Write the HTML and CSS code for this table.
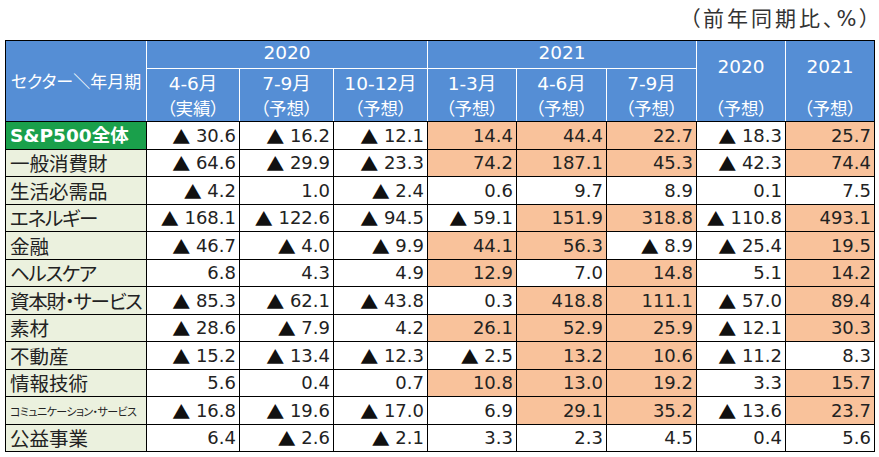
FILE: index.html
```html
<!DOCTYPE html>
<html lang="ja">
<head>
<meta charset="utf-8">
<title>セクター別 前年同期比</title>
<link rel="stylesheet" href="styles.css">
</head>
<body>
<div class="page">
  <div class="unit">（前年同期比、%）</div>
  <div class="table">
    <div class="head">
      <div class="h corner">セクター＼年月期</div>
      <div class="h grp g20">2020</div>
      <div class="h grp g21">2021</div>
      <div class="h ann a20"><span class="yr">2020</span><span class="ln">（予想）</span></div>
      <div class="h ann a21"><span class="yr">2021</span><span class="ln">（予想）</span></div>
      <div class="h sub"><span class="ln">4-6月</span><span class="ln">（実績）</span></div>
      <div class="h sub"><span class="ln">7-9月</span><span class="ln">（予想）</span></div>
      <div class="h sub"><span class="ln">10-12月</span><span class="ln">（予想）</span></div>
      <div class="h sub"><span class="ln">1-3月</span><span class="ln">（予想）</span></div>
      <div class="h sub"><span class="ln">4-6月</span><span class="ln">（予想）</span></div>
      <div class="h sub"><span class="ln">7-9月</span><span class="ln">（予想）</span></div>
    </div>
    <div class="body">
      <div class="c lbl total">S&amp;P500全体</div>
      <div class="c"><span class="tri">▲</span> 30.6</div>
      <div class="c"><span class="tri">▲</span> 16.2</div>
      <div class="c"><span class="tri">▲</span> 12.1</div>
      <div class="c o">14.4</div>
      <div class="c o">44.4</div>
      <div class="c o">22.7</div>
      <div class="c"><span class="tri">▲</span> 18.3</div>
      <div class="c o">25.7</div>

      <div class="c lbl">一般消費財</div>
      <div class="c"><span class="tri">▲</span> 64.6</div>
      <div class="c"><span class="tri">▲</span> 29.9</div>
      <div class="c"><span class="tri">▲</span> 23.3</div>
      <div class="c o">74.2</div>
      <div class="c o">187.1</div>
      <div class="c o">45.3</div>
      <div class="c"><span class="tri">▲</span> 42.3</div>
      <div class="c o">74.4</div>

      <div class="c lbl">生活必需品</div>
      <div class="c"><span class="tri">▲</span> 4.2</div>
      <div class="c">1.0</div>
      <div class="c"><span class="tri">▲</span> 2.4</div>
      <div class="c">0.6</div>
      <div class="c">9.7</div>
      <div class="c">8.9</div>
      <div class="c">0.1</div>
      <div class="c">7.5</div>

      <div class="c lbl kana">エネルギー</div>
      <div class="c"><span class="tri">▲</span> 168.1</div>
      <div class="c"><span class="tri">▲</span> 122.6</div>
      <div class="c"><span class="tri">▲</span> 94.5</div>
      <div class="c"><span class="tri">▲</span> 59.1</div>
      <div class="c o">151.9</div>
      <div class="c o">318.8</div>
      <div class="c"><span class="tri">▲</span> 110.8</div>
      <div class="c o">493.1</div>

      <div class="c lbl">金融</div>
      <div class="c"><span class="tri">▲</span> 46.7</div>
      <div class="c"><span class="tri">▲</span> 4.0</div>
      <div class="c"><span class="tri">▲</span> 9.9</div>
      <div class="c o">44.1</div>
      <div class="c o">56.3</div>
      <div class="c"><span class="tri">▲</span> 8.9</div>
      <div class="c"><span class="tri">▲</span> 25.4</div>
      <div class="c o">19.5</div>

      <div class="c lbl kana">ヘルスケア</div>
      <div class="c">6.8</div>
      <div class="c">4.3</div>
      <div class="c">4.9</div>
      <div class="c o">12.9</div>
      <div class="c">7.0</div>
      <div class="c o">14.8</div>
      <div class="c">5.1</div>
      <div class="c o">14.2</div>

      <div class="c lbl kana">資本財・サービス</div>
      <div class="c"><span class="tri">▲</span> 85.3</div>
      <div class="c"><span class="tri">▲</span> 62.1</div>
      <div class="c"><span class="tri">▲</span> 43.8</div>
      <div class="c">0.3</div>
      <div class="c o">418.8</div>
      <div class="c o">111.1</div>
      <div class="c"><span class="tri">▲</span> 57.0</div>
      <div class="c o">89.4</div>

      <div class="c lbl">素材</div>
      <div class="c"><span class="tri">▲</span> 28.6</div>
      <div class="c"><span class="tri">▲</span> 7.9</div>
      <div class="c">4.2</div>
      <div class="c o">26.1</div>
      <div class="c o">52.9</div>
      <div class="c o">25.9</div>
      <div class="c"><span class="tri">▲</span> 12.1</div>
      <div class="c o">30.3</div>

      <div class="c lbl">不動産</div>
      <div class="c"><span class="tri">▲</span> 15.2</div>
      <div class="c"><span class="tri">▲</span> 13.4</div>
      <div class="c"><span class="tri">▲</span> 12.3</div>
      <div class="c"><span class="tri">▲</span> 2.5</div>
      <div class="c o">13.2</div>
      <div class="c o">10.6</div>
      <div class="c"><span class="tri">▲</span> 11.2</div>
      <div class="c">8.3</div>

      <div class="c lbl">情報技術</div>
      <div class="c">5.6</div>
      <div class="c">0.4</div>
      <div class="c">0.7</div>
      <div class="c o">10.8</div>
      <div class="c o">13.0</div>
      <div class="c o">19.2</div>
      <div class="c">3.3</div>
      <div class="c o">15.7</div>

      <div class="c lbl small">コミュニケーション・サービス</div>
      <div class="c"><span class="tri">▲</span> 16.8</div>
      <div class="c"><span class="tri">▲</span> 19.6</div>
      <div class="c"><span class="tri">▲</span> 17.0</div>
      <div class="c">6.9</div>
      <div class="c o">29.1</div>
      <div class="c o">35.2</div>
      <div class="c"><span class="tri">▲</span> 13.6</div>
      <div class="c o">23.7</div>

      <div class="c lbl">公益事業</div>
      <div class="c">6.4</div>
      <div class="c"><span class="tri">▲</span> 2.6</div>
      <div class="c"><span class="tri">▲</span> 2.1</div>
      <div class="c">3.3</div>
      <div class="c">2.3</div>
      <div class="c">4.5</div>
      <div class="c">0.4</div>
      <div class="c">5.6</div>
    </div>
  </div>
</div>
</body>
</html>
```

FILE: styles.css
```css
html, body {
  margin: 0;
  padding: 0;
  background: #ffffff;
}

.page {
  width: 879px;
  height: 457px;
  padding-left: 5px;
  box-sizing: border-box;
  font-family: "DejaVu Sans", "Noto Sans CJK JP", sans-serif;
  font-feature-settings: "palt";
  color: #222222;
}

.unit {
  width: 870px;
  height: 40px;
  line-height: 38px;
  text-align: right;
  font-family: "DejaVu Sans", "Noto Sans CJK JP", sans-serif;
  font-size: 21px;
  letter-spacing: 3px;
  padding-right: 2px;
  box-sizing: border-box;
  color: #333333;
}

.table {
  width: 870px;
  border: 1px solid #000000;
  box-sizing: border-box;
  background: #000000;
  display: flex;
  flex-direction: column;
  gap: 1px;
}

.head,
.body {
  display: grid;
  grid-template-columns: 140px 92px 93px 93px 88px 89px 89px 88px 88px;
  gap: 1px;
}

.head {
  background: #ffffff;
  grid-template-rows: 27px 52px;
}

.body {
  background: #000000;
  grid-template-rows: repeat(6, 27px 26px);
}

.h {
  background: #558ed5;
  color: #ffffff;
  display: flex;
  flex-direction: column;
  align-items: center;
  font-size: 18.5px;
}

.corner {
  grid-row: 1 / 3;
  grid-column: 1;
  justify-content: center;
  font-family: "Noto Sans CJK JP", sans-serif;
  font-size: 17px;
  padding-bottom: 2px;
}

.grp {
  justify-content: center;
  line-height: 24px;
  padding-bottom: 3px;
}

.g20 { grid-column: 2 / 5; grid-row: 1; }
.g21 { grid-column: 5 / 8; grid-row: 1; }

.ann {
  grid-row: 1 / 3;
  justify-content: space-between;
  padding-top: 14px;
}

.a20 { grid-column: 8; }
.a21 { grid-column: 9; }

.yr {
  line-height: 24px;
}

.sub {
  justify-content: flex-end;
  gap: 1px;
}

.ln {
  line-height: 24px;
}

.ln + .ln,
.ann .ln {
  font-size: 17.5px;
}

.c {
  background: #ffffff;
  display: flex;
  align-items: center;
  justify-content: flex-end;
  padding-right: 3px;
  font-size: 18px;
  white-space: pre;
  line-height: 24px;
}

.c.o {
  background: #f9c29b;
}

.tri {
  font-family: "Noto Sans CJK JP", sans-serif;
  font-size: 18px;
  color: #111111;
}

.c.lbl {
  background: #ebf1de;
  justify-content: flex-start;
  padding-left: 4px;
  padding-right: 0;
  font-family: "Noto Sans CJK JP", sans-serif;
  font-size: 19.5px;
  line-height: 24px;
}

.c.lbl.kana {
  letter-spacing: -1.2px;
}

.c.lbl.total {
  background: #1aa04b;
  color: #ffffff;
  font-family: "DejaVu Sans", "Noto Sans CJK JP", sans-serif;
  font-weight: bold;
  font-size: 18.5px;
}

.c.lbl.small {
  font-size: 11px;
  letter-spacing: -0.6px;
}
```
